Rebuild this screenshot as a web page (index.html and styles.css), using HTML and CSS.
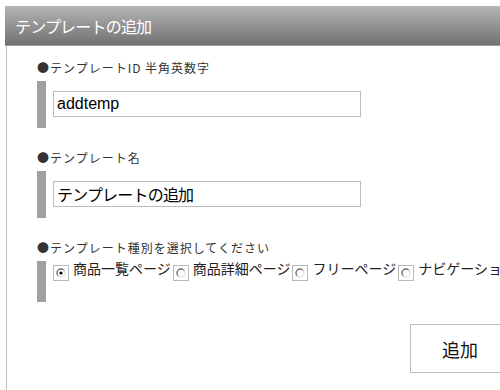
FILE: index.html
```html
<!DOCTYPE html>
<html lang="ja">
<head>
<meta charset="utf-8">
<title>テンプレートの追加</title>
<link rel="stylesheet" href="styles.css">
</head>
<body>
<div class="panel">
  <div class="header"><h1 class="title">テンプレートの追加</h1></div>
  <form class="content">
    <div class="field">
      <div class="field-label">●テンプレートID 半角英数字</div>
      <div class="bar">
        <input class="text-input latin" type="text" value="addtemp">
      </div>
    </div>
    <div class="field">
      <div class="field-label">●テンプレート名</div>
      <div class="bar">
        <input class="text-input cjk" type="text" value="テンプレートの追加">
      </div>
    </div>
    <div class="field">
      <div class="field-label">●テンプレート種別を選択してください</div>
      <div class="bar bar-radios">
        <div class="choices">
          <label class="choice">
            <span class="radio"><svg width="14" height="14" viewBox="0 0 14 14"><defs><linearGradient id="g1" x1="0" y1="0" x2="1" y2="1"><stop offset="0.35" stop-color="#6a6a6a"/><stop offset="0.65" stop-color="#e4e4e4"/></linearGradient></defs><circle cx="7" cy="7" r="4" fill="#fff" stroke="url(#g1)" stroke-width="1.4"/><circle cx="7" cy="7" r="1.6" fill="#000"/></svg></span>
            <span class="choice-text">商品一覧ページ</span>
          </label>
          <label class="choice">
            <span class="radio"><svg width="14" height="14" viewBox="0 0 14 14"><defs><linearGradient id="g2" x1="0" y1="0" x2="1" y2="1"><stop offset="0.35" stop-color="#6a6a6a"/><stop offset="0.65" stop-color="#e4e4e4"/></linearGradient></defs><circle cx="7" cy="7" r="4" fill="#fff" stroke="url(#g2)" stroke-width="1.4"/></svg></span>
            <span class="choice-text">商品詳細ページ</span>
          </label>
          <label class="choice">
            <span class="radio"><svg width="14" height="14" viewBox="0 0 14 14"><defs><linearGradient id="g3" x1="0" y1="0" x2="1" y2="1"><stop offset="0.35" stop-color="#6a6a6a"/><stop offset="0.65" stop-color="#e4e4e4"/></linearGradient></defs><circle cx="7" cy="7" r="4" fill="#fff" stroke="url(#g3)" stroke-width="1.4"/></svg></span>
            <span class="choice-text">フリーページ</span>
          </label>
          <label class="choice">
            <span class="radio"><svg width="14" height="14" viewBox="0 0 14 14"><defs><linearGradient id="g4" x1="0" y1="0" x2="1" y2="1"><stop offset="0.35" stop-color="#6a6a6a"/><stop offset="0.65" stop-color="#e4e4e4"/></linearGradient></defs><circle cx="7" cy="7" r="4" fill="#fff" stroke="url(#g4)" stroke-width="1.4"/></svg></span>
            <span class="choice-text">ナビゲーションページ</span>
          </label>
        </div>
      </div>
    </div>
    <div class="actions">
      <button class="submit" type="button">追加</button>
    </div>
  </form>
</div>
</body>
</html>
```
FILE: styles.css
```css
html, body {
  margin: 0;
  padding: 0;
  overflow: hidden;
  background: #fff;
}
body {
  font-family: "Noto Sans CJK JP", "Noto Sans", sans-serif;
  color: #333;
}
.panel {
  margin: 6px 0 0 5px;
  width: 525px;
}
.header {
  height: 39px;
  border-bottom: 1px solid #9c9c9c;
  background: linear-gradient(#b5b5b5, #717171);
  display: flex;
  align-items: center;
  padding-left: 10px;
}
.title {
  margin: 0;
  font-size: 16px;
  font-weight: 400;
  letter-spacing: -0.8px;
  color: #fff;
  line-height: 20px;
}
.content {
  box-sizing: border-box;
  margin-left: 1px;
  border-left: 1px solid #bdbdbd;
  padding: 12px 20px 0 30px;
  height: 344px;
  display: flex;
  flex-direction: column;
}
.field + .field {
  margin-top: 20px;
}
.field-label {
  font-size: 12px;
  letter-spacing: 1px;
  line-height: 20px;
  color: #333;
  margin-bottom: 3px;
  white-space: nowrap;
}
.bar {
  border-left: 9px solid #a0a0a0;
  padding: 10px 0 11px 7px;
}
.text-input {
  display: block;
  box-sizing: border-box;
  width: 308px;
  height: 26px;
  margin: 0;
  border: 1px solid #bcbcbc;
  padding: 0 3px;
  background: #fff;
  color: #000;
  outline: none;
}
.latin {
  font-family: "Liberation Sans", Arial, sans-serif;
  font-size: 16px;
}
.cjk {
  font-family: "Noto Sans CJK JP", sans-serif;
  font-size: 16px;
  letter-spacing: -0.8px;
}
.bar-radios {
  padding: 0 0 21px 7px;
}
.choices {
  display: flex;
  white-space: nowrap;
}
.choice {
  display: flex;
  align-items: flex-start;
  flex-shrink: 0;
  margin-right: 2px;
}
.radio {
  box-sizing: border-box;
  width: 16px;
  height: 16px;
  margin-top: 4px;
  border: 1px solid #b8b8b8;
  background: #fff;
  display: flex;
}
.radio svg {
  display: block;
}
.choice-text {
  margin-left: 4px;
  font-size: 14px;
  line-height: 15px;
  color: #222;
}
.actions {
  display: flex;
  justify-content: flex-end;
  margin-top: 22px;
}
.submit {
  box-sizing: border-box;
  width: 100px;
  height: 49px;
  border: 1px solid #bdbdbd;
  background: #fff;
  font-family: "Noto Sans CJK JP", sans-serif;
  font-size: 18px;
  color: #111;
  padding: 0;
}
```
